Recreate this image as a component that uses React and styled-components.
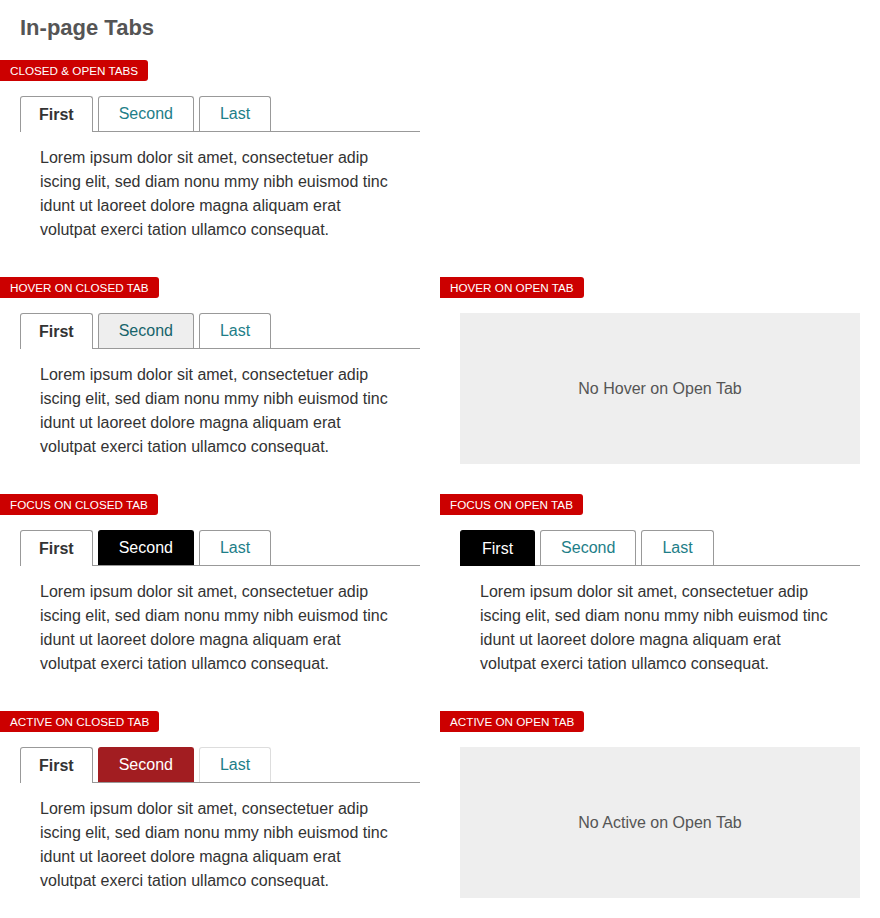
import React from 'react';
import styled, { createGlobalStyle, css } from 'styled-components';

const GlobalStyle = createGlobalStyle`
    body {
        margin: 0;
        background: #fff;
        font-family: "Liberation Sans", Arial, sans-serif;
    }
`

const Page = styled.div`
    width: 880px;
    padding-bottom: 20px;
`

const Title = styled.h1`
    margin: 0;
    padding: 14px 20px 18px;
    font-size: 22px;
    line-height: 28px;
    font-weight: 700;
    color: #555;
`

const Grid = styled.div`
    display: grid;
    grid-template-columns: 440px 440px;
    row-gap: 30px;
`

const Section = styled.div`
    display: flex;
    flex-direction: column;
`

const Label = styled.div`
    align-self: flex-start;
    height: 21px;
    line-height: 21px;
    padding: 0 10px;
    background: #cc0000;
    color: #fff;
    font-size: 11.7px;
    text-transform: uppercase;
    border-radius: 0 3px 3px 0;
`

const Body = styled.div`
    padding: 15px 20px 0;
`

const TabList = styled.div`
    display: flex;
    align-items: flex-end;
    gap: 5px;
    width: 400px;
    height: 35px;
    border-bottom: 1px solid #999;
`

const tabStates = {
    open: css`
        height: 36px;
        margin-bottom: -1px;
        padding: 0 18px;
        color: #333;
        font-weight: 700;
    `,
    closed: css``,
    hover: css`
        background: #eee;
        color: #17646b;
    `,
    focus: css`
        background: #000;
        border-color: #000;
        color: #fff;
    `,
    focusOpen: css`
        height: 36px;
        margin-bottom: -1px;
        padding: 0 21px;
        background: #000;
        border-color: #000;
        color: #fff;
    `,
    active: css`
        background: #a21d21;
        border-color: #a21d21;
        color: #fff;
    `,
}

const Tab = styled.div`
    box-sizing: border-box;
    height: 35px;
    display: flex;
    align-items: center;
    padding: 0 20px;
    background: #fff;
    border: 1px solid ${p => (p.$light ? '#ddd' : '#999')};
    border-bottom: none;
    border-radius: 3px 3px 0 0;
    font-size: 16px;
    color: #1e7e88;
    ${p => tabStates[p.$state || 'closed']}
`

const Panel = styled.p`
    margin: 0;
    width: 360px;
    padding: 14px 20px 5px;
    font-size: 16px;
    line-height: 24px;
    color: #333;
`

const Placeholder = styled.div`
    height: 151px;
    width: 400px;
    background: #eee;
    display: flex;
    align-items: center;
    justify-content: center;
    font-size: 16px;
    color: #555;
`

const lorem = 'Lorem ipsum dolor sit amet, consectetuer adip iscing elit, sed diam nonu mmy nibh euismod tinc idunt ut laoreet dolore magna aliquam erat volutpat exerci tation ullamco consequat.'

const Tabs = ({ states, lightLast }) => (
    <>
        <TabList>
            <Tab $state={states[0]}>First</Tab>
            <Tab $state={states[1]}>Second</Tab>
            <Tab $state={states[2]} $light={lightLast}>Last</Tab>
        </TabList>
        <Panel>{lorem}</Panel>
    </>
)

const Example = ({ label, children }) => (
    <Section>
        <Label>{label}</Label>
        <Body>{children}</Body>
    </Section>
)

const App = () => {
    return (
        <Page>
            <GlobalStyle />
            <Title>In-page Tabs</Title>
            <Grid>
                <Example label="Closed & Open Tabs">
                    <Tabs states={['open', 'closed', 'closed']} />
                </Example>
                <div />
                <Example label="Hover on closed tab">
                    <Tabs states={['open', 'hover', 'closed']} />
                </Example>
                <Example label="Hover on open tab">
                    <Placeholder>No Hover on Open Tab</Placeholder>
                </Example>
                <Example label="Focus on closed tab">
                    <Tabs states={['open', 'focus', 'closed']} />
                </Example>
                <Example label="Focus on open tab">
                    <Tabs states={['focusOpen', 'closed', 'closed']} />
                </Example>
                <Example label="Active on closed tab">
                    <Tabs states={['open', 'active', 'closed']} lightLast />
                </Example>
                <Example label="Active on open tab">
                    <Placeholder>No Active on Open Tab</Placeholder>
                </Example>
            </Grid>
        </Page>
    );
}

export default App;
